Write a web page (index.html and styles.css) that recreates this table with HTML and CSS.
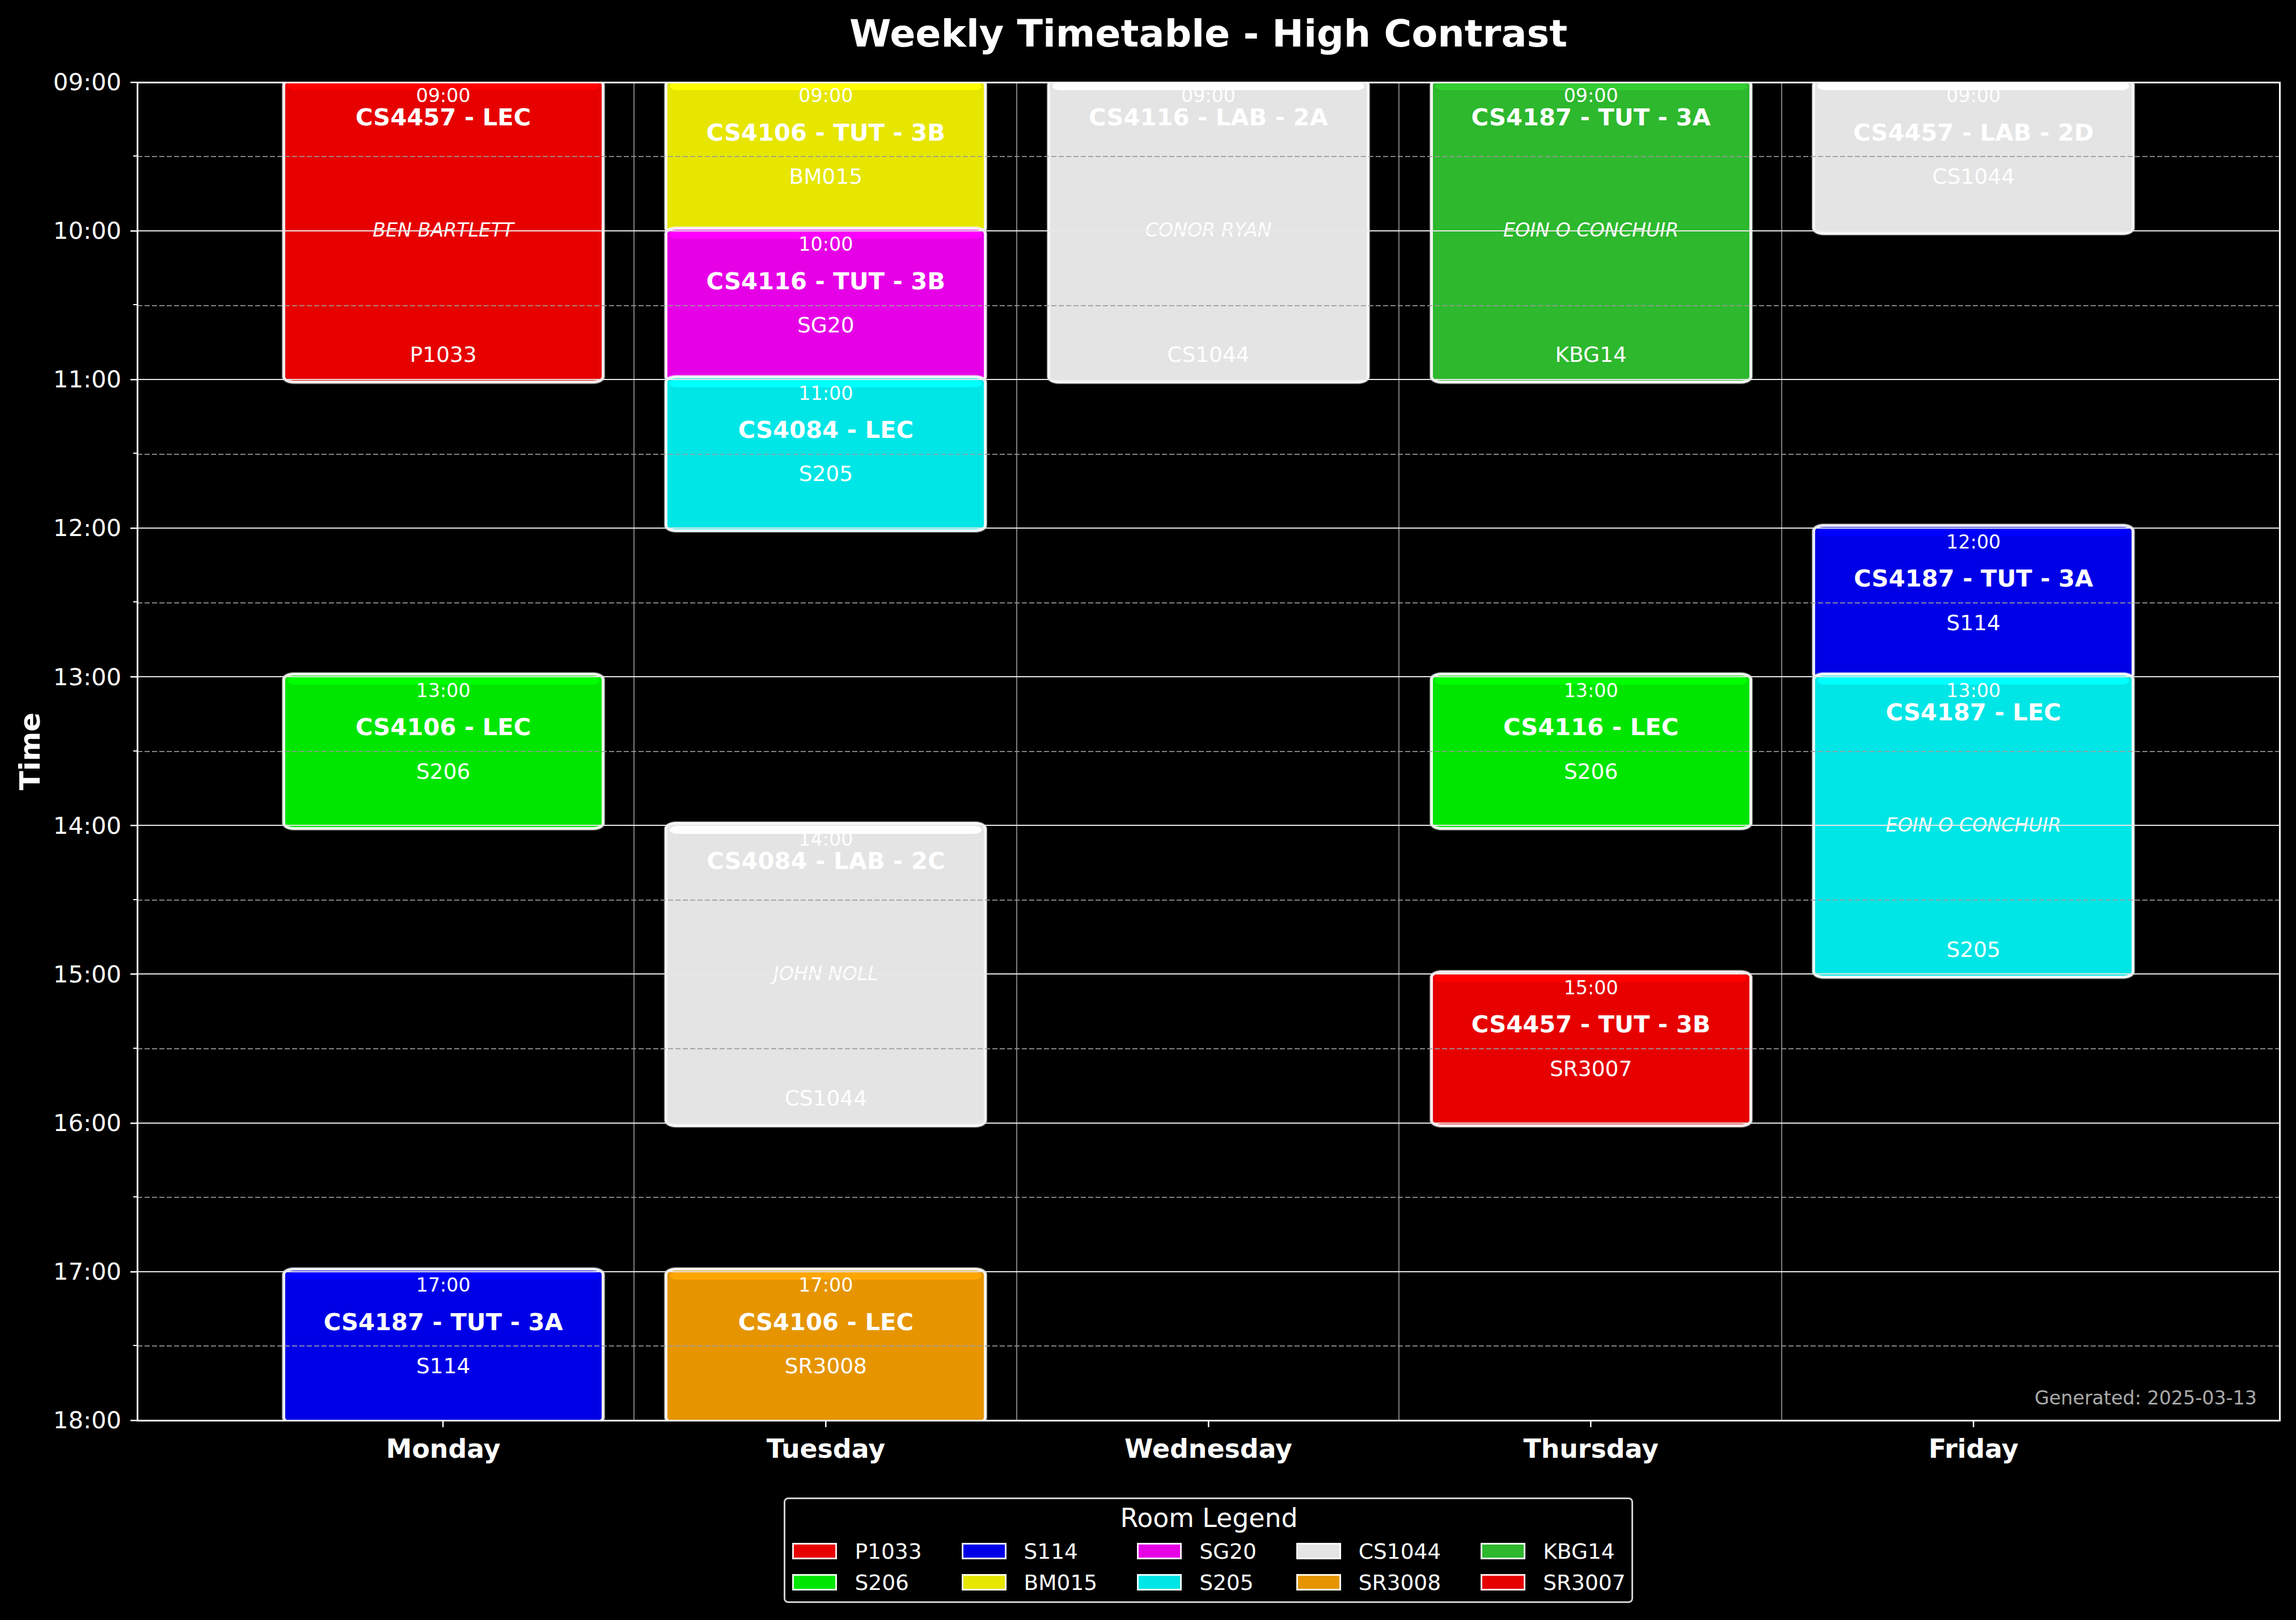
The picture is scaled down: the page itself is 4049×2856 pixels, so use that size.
FILE: index.html
```html
<!DOCTYPE html>
<html lang="en">
<head>
<meta charset="utf-8">
<title>Weekly Timetable - High Contrast</title>
<link rel="stylesheet" href="styles.css">
</head>
<body>
<div class="figure">
  <div class="title">Weekly Timetable - High Contrast</div>
  <div class="ylabel">Time</div>
  <div class="axes">
    <div class="yticks">
      <div class="yt">09:00</div><div class="yt">10:00</div><div class="yt">11:00</div><div class="yt">12:00</div><div class="yt">13:00</div>
      <div class="yt">14:00</div><div class="yt">15:00</div><div class="yt">16:00</div><div class="yt">17:00</div><div class="yt">18:00</div>
    </div>
    <div class="plot">
      <div class="vlines"><div></div><div></div><div></div><div></div><div></div></div>

      <div class="ev mon t9 d2 r-p1033"><span class="tm">09:00</span><span class="nm">CS4457 - LEC</span><span class="lc">BEN BARTLETT</span><span class="rm">P1033</span></div>
      <div class="ev mon t13 d1 r-s206"><span class="tm">13:00</span><span class="nm">CS4106 - LEC</span><span class="rm">S206</span></div>
      <div class="ev mon t17 d1 r-s114"><span class="tm">17:00</span><span class="nm">CS4187 - TUT - 3A</span><span class="rm">S114</span></div>

      <div class="ev tue t9 d1 r-bm015"><span class="tm">09:00</span><span class="nm">CS4106 - TUT - 3B</span><span class="rm">BM015</span></div>
      <div class="ev tue t10 d1 r-sg20"><span class="tm">10:00</span><span class="nm">CS4116 - TUT - 3B</span><span class="rm">SG20</span></div>
      <div class="ev tue t11 d1 r-s205"><span class="tm">11:00</span><span class="nm">CS4084 - LEC</span><span class="rm">S205</span></div>
      <div class="ev tue t14 d2 r-cs1044"><span class="tm">14:00</span><span class="nm">CS4084 - LAB - 2C</span><span class="lc">JOHN NOLL</span><span class="rm">CS1044</span></div>
      <div class="ev tue t17 d1 r-sr3008"><span class="tm">17:00</span><span class="nm">CS4106 - LEC</span><span class="rm">SR3008</span></div>

      <div class="ev wed t9 d2 r-cs1044"><span class="tm">09:00</span><span class="nm">CS4116 - LAB - 2A</span><span class="lc">CONOR RYAN</span><span class="rm">CS1044</span></div>

      <div class="ev thu t9 d2 r-kbg14"><span class="tm">09:00</span><span class="nm">CS4187 - TUT - 3A</span><span class="lc">EOIN O CONCHUIR</span><span class="rm">KBG14</span></div>
      <div class="ev thu t13 d1 r-s206"><span class="tm">13:00</span><span class="nm">CS4116 - LEC</span><span class="rm">S206</span></div>
      <div class="ev thu t15 d1 r-sr3007"><span class="tm">15:00</span><span class="nm">CS4457 - TUT - 3B</span><span class="rm">SR3007</span></div>

      <div class="ev fri t9 d1 r-cs1044"><span class="tm">09:00</span><span class="nm">CS4457 - LAB - 2D</span><span class="rm">CS1044</span></div>
      <div class="ev fri t12 d1 r-s114"><span class="tm">12:00</span><span class="nm">CS4187 - TUT - 3A</span><span class="rm">S114</span></div>
      <div class="ev fri t13 d2 r-s205"><span class="tm">13:00</span><span class="nm">CS4187 - LEC</span><span class="lc">EOIN O CONCHUIR</span><span class="rm">S205</span></div>

      <div class="hlines"><div></div><div></div><div></div><div></div><div></div><div></div><div></div><div></div><div></div></div>
      <div class="gen">Generated: 2025-03-13</div>
    </div>
  </div>
  <div class="xticks">
    <div class="xt">Monday</div><div class="xt">Tuesday</div><div class="xt">Wednesday</div><div class="xt">Thursday</div><div class="xt">Friday</div>
  </div>
  <div class="legend">
    <div class="legend-title">Room Legend</div>
    <div class="legend-grid">
      <div class="li r-p1033"><span class="sw"></span>P1033</div>
      <div class="li r-s206"><span class="sw"></span>S206</div>
      <div class="li r-s114"><span class="sw"></span>S114</div>
      <div class="li r-bm015"><span class="sw"></span>BM015</div>
      <div class="li r-sg20"><span class="sw"></span>SG20</div>
      <div class="li r-s205"><span class="sw"></span>S205</div>
      <div class="li r-cs1044"><span class="sw"></span>CS1044</div>
      <div class="li r-sr3008"><span class="sw"></span>SR3008</div>
      <div class="li r-kbg14"><span class="sw"></span>KBG14</div>
      <div class="li r-sr3007"><span class="sw"></span>SR3007</div>
    </div>
  </div>
</div>
</body>
</html>
```
FILE: styles.css
```css
html, body {
  margin: 0;
  background: #000;
}
body {
  color: #fff;
  font-family: "DejaVu Sans", "Liberation Sans", sans-serif;
}
.figure {
  width: 4049px;
  height: 2856px;
  display: grid;
  grid-template-columns: 242px 3778px 1fr;
  grid-template-rows: 145px 2359px auto auto;
  align-content: start;
  overflow: hidden;
}
.title {
  grid-column: 2;
  grid-row: 1;
  align-self: end;
  text-align: center;
  font-size: 66.7px;
  line-height: 66.7px;
  font-weight: 700;
  margin-bottom: 52.7px;
}
.ylabel {
  grid-column: 1;
  grid-row: 2;
  align-self: center;
  justify-self: start;
  margin-left: 28px;
  writing-mode: vertical-rl;
  transform: rotate(180deg);
  font-size: 50px;
  line-height: 50px;
  font-weight: 700;
}
.axes {
  grid-column: 2;
  grid-row: 2;
  position: relative;
}
.axes::after {
  content: "";
  position: absolute;
  inset: -1.5px;
  border: 3px solid #fff;
  pointer-events: none;
  z-index: 5;
}
.yticks {
  position: absolute;
  right: 100%;
  top: -131.05px;
  bottom: -131.05px;
  width: 240px;
  display: grid;
  grid-template-rows: repeat(10, minmax(0, 1fr));
  font-size: 41.7px;
  line-height: 1;
}
.yt {
  display: flex;
  align-items: center;
  justify-content: flex-end;
  padding-right: 28px;
  background:
    linear-gradient(#fff, #fff) right center / 12px 2.5px no-repeat,
    linear-gradient(#fff, #fff) right bottom / 7px 2px no-repeat;
}
.yt:last-child {
  background: linear-gradient(#fff, #fff) right center / 12px 2.5px no-repeat;
}
.plot {
  width: 100%;
  height: 100%;
  position: relative;
  overflow: hidden;
  display: grid;
  grid-template-columns:
    minmax(0, .4fr)
    minmax(0, .8fr) minmax(0, .2fr)
    minmax(0, .8fr) minmax(0, .2fr)
    minmax(0, .8fr) minmax(0, .2fr)
    minmax(0, .8fr) minmax(0, .2fr)
    minmax(0, .8fr) minmax(0, .4fr);
  grid-template-rows: repeat(9, minmax(0, 1fr));
}
.vlines {
  grid-column: 1 / -1;
  grid-row: 1 / -1;
  display: grid;
  grid-template-columns: minmax(0, 1.3fr) repeat(3, minmax(0, 1fr)) minmax(0, 1.3fr);
}
.vlines > div:not(:last-child) {
  border-right: 2px solid #7c7c7c;
}
.hlines {
  grid-column: 1 / -1;
  grid-row: 1 / -1;
  z-index: 2;
  display: grid;
  grid-template-rows: repeat(9, minmax(0, 1fr));
  pointer-events: none;
}
.hlines > div {
  background: repeating-linear-gradient(90deg, #9a9a9a 0 9px, transparent 9px 13px) 0 50% / 100% 1.7px no-repeat;
}
.hlines > div + div {
  border-top: 2.5px solid #e8e8e8;
  margin-top: -1.25px;
}
.gen {
  position: absolute;
  right: 40px;
  bottom: 23px;
  font-size: 33.3px;
  line-height: 1;
  color: #aaaaaa;
  z-index: 3;
}

/* events */
.ev {
  position: relative;
  z-index: 1;
  display: grid;
  align-content: start;
}
.ev::before {
  content: "";
  position: absolute;
  inset: -7px -14px;
  border: 5px solid rgba(248, 248, 248, .95);
  border-radius: 20px / 12px;
  background: var(--c);
  box-shadow: 0 0 0 1.5px rgba(255, 255, 255, .3);
  z-index: -1;
}
.ev::after {
  content: "";
  position: absolute;
  top: 0;
  left: -5px;
  right: -5px;
  height: 14px;
  border-radius: 14px / 7px;
  background: var(--hl);
  z-index: -1;
}
.ev > span {
  display: flex;
  align-items: center;
  justify-content: center;
  white-space: nowrap;
  line-height: 1;
}
.d1 { grid-row-end: span 1; grid-template-rows: 48px 81px 76px; }
.d2 { grid-row-end: span 2; grid-template-rows: 48px 28px 370px 70px; }
.mon { grid-column: 2; }
.tue { grid-column: 4; }
.wed { grid-column: 6; }
.thu { grid-column: 8; }
.fri { grid-column: 10; }
.t9 { grid-row-start: 1; }
.t10 { grid-row-start: 2; }
.t11 { grid-row-start: 3; }
.t12 { grid-row-start: 4; }
.t13 { grid-row-start: 5; }
.t14 { grid-row-start: 6; }
.t15 { grid-row-start: 7; }
.t16 { grid-row-start: 8; }
.t17 { grid-row-start: 9; }
.tm { font-size: 33.3px; }
.nm { font-size: 41.7px; font-weight: 700; }
.lc { font-size: 33.3px; font-style: italic; }
.rm { font-size: 37.5px; }

/* room colours */
.r-p1033 { --c: #e60000; --hl: #ff0000; }
.r-sr3007 { --c: #e60000; --hl: #ff0000; }
.r-s206 { --c: #00e600; --hl: #00ff00; }
.r-s114 { --c: #0000e6; --hl: #0000ff; }
.r-bm015 { --c: #e6e600; --hl: #ffff00; }
.r-sg20 { --c: #e600e6; --hl: #ff00ff; }
.r-s205 { --c: #00e6e6; --hl: #00ffff; }
.r-cs1044 { --c: #e4e4e4; --hl: #ffffff; }
.r-sr3008 { --c: #e69500; --hl: #ffa500; }
.r-kbg14 { --c: #2db82d; --hl: #32cd32; }

/* x ticks */
.xticks {
  grid-column: 2;
  grid-row: 3;
  display: grid;
  grid-template-columns: minmax(0, .3fr) repeat(5, minmax(0, 1fr)) minmax(0, .3fr);
}
.xt {
  text-align: center;
  font-size: 45.8px;
  line-height: 1;
  font-weight: 700;
  padding-top: 28px;
  background: linear-gradient(#fff, #fff) center top / 2.5px 12px no-repeat;
}
.xt:first-child { grid-column-start: 2; }

/* legend */
.legend {
  grid-column: 2;
  grid-row: 4;
  justify-self: center;
  align-self: start;
  margin-top: 62px;
  border: 3px solid #cfcfcf;
  border-radius: 8px;
  padding: 10px 10px 15px 12px;
}
.legend-title {
  text-align: center;
  font-size: 45.8px;
  line-height: 46px;
  margin-bottom: 18px;
}
.legend-grid {
  display: grid;
  grid-template-rows: repeat(2, auto);
  grid-auto-flow: column;
  grid-auto-columns: auto;
  column-gap: 70px;
  row-gap: 19px;
}
.li {
  display: flex;
  align-items: center;
  gap: 31px;
  font-size: 37.5px;
  line-height: 36px;
  white-space: nowrap;
}
.sw {
  width: 79px;
  height: 29px;
  box-sizing: border-box;
  border: 3px solid rgba(255, 255, 255, .92);
  background: var(--c);
}
```
